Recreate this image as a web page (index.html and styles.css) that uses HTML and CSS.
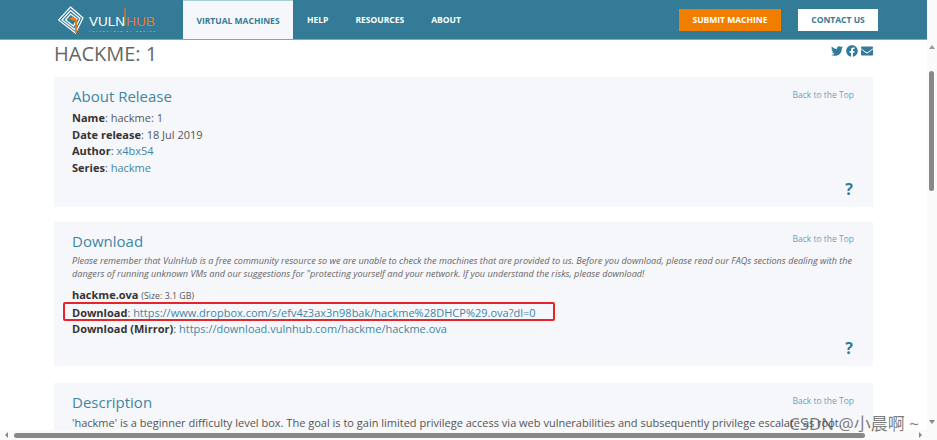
FILE: index.html
```html
<!DOCTYPE html>
<html lang="en">
<head>
    <meta charset="UTF-8">
    <meta name="viewport" content="width=device-width, initial-scale=1.0">
    <title>HACKME: 1 ~ VulnHub</title>
    <link rel="stylesheet" href="styles.css">
</head>
<body>
    <div class="window">
        <div class="viewport">
            <header class="navbar">
                <a class="logo" href="#">
                    <svg width="100" height="39" viewBox="0 0 100 39">
                        <g fill="none" stroke="#fff" stroke-width="1.2">
                            <path d="M12.500 7 L25 18 L17.500 33 L0.500 20 Z"/>
                            <path d="M12.500 10.500 L22 18.500 L16.500 29.500 L4 20 Z"/>
                            <path d="M12.500 14 L19 19 L15.500 26 L7.500 20 Z"/>
                        </g>
                        <path d="M11 19 L15 16.500 L18.500 19 L16.500 21 Z" fill="#e87a1d"/>
                        <path d="M18 19.500 v13.500" stroke="#e87a1d" stroke-width="2"/>
                        <path d="M67 8 v17" stroke="#e87a1d" stroke-width="1.200"/>
                        <text class="logo-vuln" x="31" y="26" textLength="36" lengthAdjust="spacingAndGlyphs">VULN</text>
                        <text class="logo-hub" x="68" y="26" textLength="29" lengthAdjust="spacingAndGlyphs">HUB</text>
                        <text class="logo-tag" x="31" y="32" textLength="66">VULNERABLE BY DESIGN</text>
                    </svg>
                </a>
                <nav class="nav-links">
                    <a class="nav-link active" href="#">VIRTUAL MACHINES</a>
                    <a class="nav-link" href="#">HELP</a>
                    <a class="nav-link" href="#">RESOURCES</a>
                    <a class="nav-link" href="#">ABOUT</a>
                </nav>
                <div class="nav-buttons">
                    <a class="btn btn-orange" href="#">SUBMIT MACHINE</a>
                    <a class="btn btn-white" href="#">CONTACT US</a>
                </div>
            </header>

            <main class="content">
                <div class="title-row">
                    <h1>HACKME: 1</h1>
                    <div class="share-icons">
                        <svg width="12" height="12" viewBox="0 0 512 512"><path d="M459.37 151.716c.325 4.548.325 9.097.325 13.645 0 138.72-105.583 298.558-298.558 298.558-59.452 0-114.68-17.219-161.137-47.106 8.447.974 16.568 1.299 25.34 1.299 49.055 0 94.213-16.568 130.274-44.832-46.132-.975-84.792-31.188-98.112-72.772 6.498.974 12.995 1.624 19.818 1.624 9.421 0 18.843-1.3 27.614-3.573-48.081-9.747-84.143-51.98-84.143-102.985v-1.299c13.969 7.797 30.214 12.67 47.431 13.319-28.264-18.843-46.781-51.005-46.781-87.391 0-19.492 5.197-37.36 14.294-52.954 51.655 63.675 129.3 105.258 216.365 109.807-1.624-7.797-2.599-15.918-2.599-24.04 0-57.828 46.782-104.934 104.934-104.934 30.213 0 57.502 12.67 76.67 33.137 23.715-4.548 46.456-13.32 66.599-25.34-7.798 24.366-24.366 44.833-46.132 57.827 21.117-2.273 41.584-8.122 60.426-16.243-14.292 20.791-32.161 39.308-52.628 54.253z"/></svg>
                        <svg width="12" height="12" viewBox="0 0 512 512"><path d="M504 256C504 119 393 8 256 8S8 119 8 256c0 123.78 90.69 226.38 209.25 245V327.69h-63V256h63v-54.64c0-62.15 37-96.48 93.67-96.48 27.14 0 55.52 4.84 55.52 4.84v61h-31.28c-30.8 0-40.41 19.12-40.41 38.73V256h68.78l-11 71.69h-57.78V501C413.31 482.38 504 379.78 504 256z"/></svg>
                        <svg width="12" height="12" viewBox="0 0 512 512"><path d="M502.3 190.8c3.9-3.1 9.7-.2 9.7 4.7V400c0 26.5-21.5 48-48 48H48c-26.5 0-48-21.5-48-48V195.6c0-5 5.7-7.8 9.7-4.7 22.4 17.4 52.1 39.5 154.1 113.6 21.1 15.4 56.7 47.8 92.2 47.6 35.7.3 72-32.8 92.3-47.6 102-74.1 131.6-96.3 154-113.7zM256 320c23.2.4 56.6-29.2 73.4-41.4 132.7-96.3 142.8-104.7 173.4-128.7 5.8-4.5 9.2-11.5 9.2-18.9v-19c0-26.5-21.5-48-48-48H48C21.5 64 0 85.5 0 112v19c0 7.4 3.4 14.3 9.2 18.9 30.6 23.9 40.7 32.4 173.4 128.7 16.8 12.2 50.2 41.8 73.4 41.4z"/></svg>
                    </div>
                </div>

                <section class="card card-about">
                    <a class="back-top" href="#">Back to the Top</a>
                    <h2>About Release</h2>
                    <div class="line"><b>Name</b>: hackme: 1</div>
                    <div class="line"><b>Date release</b>: 18 Jul 2019</div>
                    <div class="line"><b>Author</b>: <a href="#">x4bx54</a></div>
                    <div class="line"><b>Series</b>: <a href="#">hackme</a></div>
                    <div class="help">?</div>
                </section>

                <section class="card card-download">
                    <a class="back-top" href="#">Back to the Top</a>
                    <h2>Download</h2>
                    <p class="notice">Please remember that VulnHub is a free community resource so we are unable to check the machines that are provided to us. Before you download, please read our FAQs sections dealing with the<br>dangers of running unknown VMs and our suggestions for "protecting yourself and your network. If you understand the risks, please download!</p>
                    <div class="line"><b>hackme.ova</b> <small>(Size: 3.1 GB)</small></div>
                    <div class="line marked"><b>Download</b>: <a href="#">https://www.dropbox.com/s/efv4z3ax3n98bak/hackme%28DHCP%29.ova?dl=0</a></div>
                    <div class="line"><b>Download (Mirror)</b>: <a href="#">https://download.vulnhub.com/hackme/hackme.ova</a></div>
                    <div class="help">?</div>
                </section>

                <section class="card">
                    <a class="back-top" href="#">Back to the Top</a>
                    <h2>Description</h2>
                    <div class="line">'hackme' is a beginner difficulty level box. The goal is to gain limited privilege access via web vulnerabilities and subsequently privilege escalate as root.</div>
                </section>
            </main>
        </div>

        <div class="vscroll">
            <span class="arrow-up"></span>
            <span class="vthumb"></span>
            <span class="arrow-down"></span>
        </div>
        <div class="hscroll">
            <span class="arrow-left"></span>
            <span class="hthumb"></span>
            <span class="arrow-right"></span>
        </div>
    </div>
    <div class="watermark">CSDN @小晨啊 ~</div>
</body>
</html>
```

FILE: styles.css
```css
html, body {
    margin: 0;
    height: 100%;
    overflow: hidden;
}
body {
    font-family: "Open Sans", "Noto Sans CJK SC", sans-serif;
    font-size: 11px;
    color: #555;
    background-color: #fff;
}
a {
    text-decoration: none;
    color: #3f86a3;
}
.window {
    display: grid;
    grid-template-columns: 927px 10px;
    grid-template-rows: 430px 10px;
    height: 440px;
}
.viewport {
    overflow: hidden;
}

/* top bar */
.navbar {
    display: flex;
    align-items: stretch;
    height: 39px;
    background-color: #337b96;
    border-bottom: 1px solid #7fa9ba;
}
.logo {
    display: flex;
    width: 125px;
    padding-left: 58px;
}
.logo-vuln, .logo-hub {
    font-family: "Liberation Sans", sans-serif;
    font-size: 12px;
}
.logo-vuln {
    fill: #fff;
}
.logo-hub {
    fill: #e87a1d;
}
.logo-tag {
    font-family: "Liberation Sans", sans-serif;
    font-size: 2.500px;
    fill: #c5d8e0;
}
.nav-links {
    display: flex;
}
.nav-link {
    display: flex;
    align-items: center;
    padding: 0 13px 0 14px;
    font-size: 8.500px;
    font-weight: 700;
    color: #fff;
}
.nav-link.active {
    width: 110px;
    box-sizing: border-box;
    justify-content: center;
    padding: 0;
    color: #337b96;
    background-color: #f5f7fb;
    border-top: 1px solid #a5d0d8;
}
.nav-buttons {
    display: flex;
    align-items: center;
    gap: 17px;
    margin-left: auto;
    margin-right: 49px;
}
.btn {
    display: flex;
    align-items: center;
    justify-content: center;
    height: 22px;
    font-size: 8.500px;
    font-weight: 700;
}
.btn-orange {
    width: 102px;
    color: #fff;
    background-color: #f27e00;
}
.btn-white {
    width: 80px;
    color: #337b96;
    background-color: #fff;
}

/* page content */
.content {
    padding: 0 54px;
}
.title-row {
    display: flex;
    justify-content: space-between;
    height: 37px;
}
h1 {
    margin: 0;
    font-size: 20px;
    font-weight: 400;
    line-height: 27px;
    color: #666;
}
.share-icons {
    display: flex;
    gap: 3px;
    padding-top: 5px;
    fill: #337b96;
}
.card {
    position: relative;
    padding: 10px 18px 0;
    margin-bottom: 15px;
    background-color: #f6f7fb;
}
.card-about {
    height: 120px;
}
.card-about h2 {
    margin-bottom: 5px;
}
.card-download {
    height: 134px;
    margin-bottom: 17px;
}
h2 {
    margin: 0 0 4px;
    font-size: 15px;
    font-weight: 400;
    line-height: 18px;
    color: #3f86a3;
}
.back-top {
    position: absolute;
    top: 12px;
    right: 19px;
    font-size: 8.500px;
    color: #6f9fb5;
}
.card-download .back-top {
    top: 11px;
}
.line {
    font-size: 11px;
    line-height: 16.500px;
    white-space: nowrap;
}
.line b {
    font-weight: 700;
    color: #333;
}
small {
    font-size: 8.800px;
}
.notice {
    margin: 3px 0 7px;
    font-size: 9.100px;
    font-style: italic;
    line-height: 13px;
    color: #666;
}
.marked {
    position: relative;
}
.marked::after {
    content: "";
    position: absolute;
    top: -3px;
    left: -9px;
    width: 488px;
    height: 15px;
    border: 2px solid #e8232a;
    border-radius: 2px;
}
.help {
    position: absolute;
    right: 20px;
    bottom: 7px;
    font-size: 16px;
    font-weight: 700;
    color: #337b96;
}

/* fake scrollbars */
.vscroll {
    position: relative;
    background-color: #fafafa;
}
.arrow-up {
    position: absolute;
    top: 45px;
    left: 2px;
    border: 3px solid transparent;
    border-top: 0;
    border-bottom: 4px solid #999;
}
.vthumb {
    position: absolute;
    top: 71px;
    left: 2px;
    width: 5px;
    height: 120px;
    border-radius: 3px;
    background-color: #888;
}
.arrow-down {
    position: absolute;
    top: 420px;
    left: 2px;
    border: 3px solid transparent;
    border-bottom: 0;
    border-top: 4px solid #888;
}
.hscroll {
    grid-column: 1 / 3;
    display: flex;
    align-items: center;
    background-color: #fafafa;
}
.arrow-left {
    margin-left: 5px;
    border: 3px solid transparent;
    border-left: 0;
    border-right: 3px solid #888;
}
.hthumb {
    width: 851px;
    height: 5px;
    margin-left: 6px;
    border-radius: 3px;
    background-color: #888;
}
.arrow-right {
    margin-left: 54px;
    border: 3px solid transparent;
    border-right: 0;
    border-left: 3px solid #888;
}
.watermark {
    position: absolute;
    top: 410px;
    left: 789px;
    font-size: 17px;
    color: rgba(80, 80, 80, 0.75);
    white-space: nowrap;
}
```
